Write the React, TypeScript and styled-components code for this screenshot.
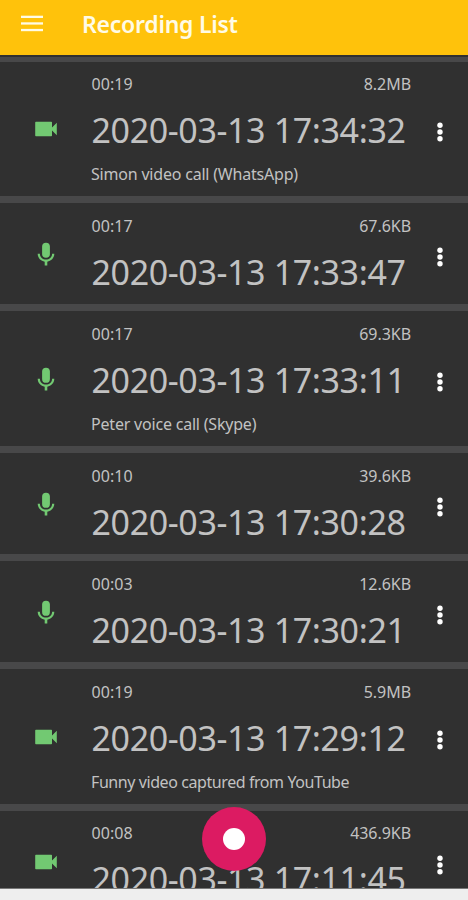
import React from "react";
import styled, { createGlobalStyle } from "styled-components";

const GlobalStyle = createGlobalStyle`
  * { box-sizing: border-box; }
  body { margin: 0; background: #eeeeee; font-family: "Noto Sans", sans-serif; }
`;

const Screen = styled.div`
  position: relative;
  width: 468px;
  height: 900px;
  overflow: hidden;
  display: flex;
  flex-direction: column;
  background: #eeeeee;
`;

const AppBar = styled.header`
  height: 55px;
  flex: none;
  display: flex;
  align-items: flex-start;
  background: #ffc20b;
  color: #fffbe6;
`;

const MenuButton = styled.button`
  border: 0;
  padding: 15px 0 0 21px;
  width: 82px;
  flex: none;
  background: none;
  color: inherit;
  text-align: left;
  line-height: 0;
`;

const Title = styled.h1`
  margin: 0;
  padding-top: 9px;
  font-size: 23px;
  line-height: 30px;
  font-weight: 600;
  letter-spacing: -0.25px;
  white-space: nowrap;
`;

const List = styled.main`
  height: 834px;
  flex: none;
  overflow: hidden;
  padding-top: 2px;
  background: #303030;
  border-bottom: 1px solid #777777;
`;

const Row = styled.article<{ $height: number; $rule?: number }>`
  height: ${(p) => p.$height}px;
  display: grid;
  grid-template-columns: 91px 320px 57px;
  border-top: ${(p) => p.$rule ?? 7}px solid #484849;
  background: #303030;
  color: #c2c2c2;
`;

const KindIcon = styled.div`
  display: flex;
  align-items: center;
  padding-left: 34px;
  color: #72c972;
`;

const Details = styled.div<{ $top: number }>`
  min-width: 0;
  padding-top: ${(p) => p.$top}px;
`;

const Meta = styled.div`
  display: flex;
  justify-content: space-between;
  font-size: 16px;
  line-height: 23px;
`;

const Duration = styled.span`
  margin-left: 0.5px;
  letter-spacing: 0.05px;
`;

const Size = styled.span`
  letter-spacing: -0.05px;
`;

const Stamp = styled.div`
  margin-left: 0.5px;
  padding-top: 11px;
  font-size: 34px;
  line-height: 46px;
  letter-spacing: -0.38px;
  white-space: nowrap;
`;

const Note = styled.div<{ $spacing: number }>`
  padding-top: 10px;
  font-size: 16px;
  line-height: 23px;
  letter-spacing: ${(p) => p.$spacing}px;
  white-space: nowrap;
`;

const MoreButton = styled.button`
  display: flex;
  align-items: center;
  border: 0;
  padding: 6px 0 0 23.5px;
  background: none;
  color: #ffffff;
`;

const RecordButton = styled.button`
  position: absolute;
  left: 202px;
  top: 807px;
  width: 64px;
  height: 64px;
  padding: 0;
  border: 0;
  border-radius: 50%;
  display: grid;
  place-items: center;
  background: #dc1b62;
`;

const RecordDot = styled.span`
  width: 22px;
  height: 22px;
  border-radius: 50%;
  background: #ffffff;
`;

const MenuIcon = () => (
  <svg width="22" height="17" viewBox="0 0 22 17" fill="currentColor">
    <rect y="0.7" width="22" height="2.3" />
    <rect y="7.3" width="22" height="2.3" />
    <rect y="13.9" width="22" height="2.3" />
  </svg>
);

const VideoIcon = () => (
  <svg width="24" height="24" viewBox="0 0 24 24" fill="currentColor">
    <path d="M1.9 4.8h15.4a.7.7 0 0 1 .7.7v4.9l4.8-4.7v12.6L18 13.6v4.9a.7.7 0 0 1-.7.7H1.9a.7.7 0 0 1-.7-.7v-13a.7.7 0 0 1 .7-.7z" />
  </svg>
);

const MicIcon = () => (
  <svg width="24" height="26" viewBox="0 0 24 26" fill="currentColor">
    <rect x="8.1" y="1.8" width="7.8" height="15" rx="3.9" />
    <path d="M3.7 12.8h2.2c0 3.6 2.8 5.8 6.1 5.8s6.1-2.2 6.1-5.8h2.2c0 4.1-3.2 7.3-7 7.9v3.8h-2.6v-3.8c-3.8-.6-7-3.8-7-7.9z" />
  </svg>
);

const MoreIcon = () => (
  <svg width="10" height="20" viewBox="0 0 10 20" fill="currentColor">
    <circle cx="5" cy="3.2" r="2.7" />
    <circle cx="5" cy="10" r="2.7" />
    <circle cx="5" cy="16.8" r="2.7" />
  </svg>
);

type Recording = {
  kind: "video" | "voice";
  duration: string;
  size: string;
  stamp: string;
  note?: string;
  spacing?: number;
  height: number;
  rule?: number;
  top?: number;
};

const recordings: Recording[] = [
  { kind: "video", duration: "00:19", size: "8.2MB", stamp: "2020-03-13 17:34:32", note: "Simon video call (WhatsApp)", spacing: -0.2, height: 139, rule: 5, top: 11 },
  { kind: "voice", duration: "00:17", size: "67.6KB", stamp: "2020-03-13 17:33:47", height: 108 },
  { kind: "voice", duration: "00:17", size: "69.3KB", stamp: "2020-03-13 17:33:11", note: "Peter voice call (Skype)", spacing: -0.2, height: 142 },
  { kind: "voice", duration: "00:10", size: "39.6KB", stamp: "2020-03-13 17:30:28", height: 108 },
  { kind: "voice", duration: "00:03", size: "12.6KB", stamp: "2020-03-13 17:30:21", height: 108 },
  { kind: "video", duration: "00:19", size: "5.9MB", stamp: "2020-03-13 17:29:12", note: "Funny video captured from YouTube", spacing: -0.42, height: 142 },
  { kind: "video", duration: "00:08", size: "436.9KB", stamp: "2020-03-13 17:11:45", height: 108, top: 11 },
];

export default function App() {
  return (
    <>
      <GlobalStyle />
      <Screen>
        <AppBar>
          <MenuButton aria-label="Menu"><MenuIcon /></MenuButton>
          <Title>Recording List</Title>
        </AppBar>
        <List>
          {recordings.map((r) => (
            <Row key={r.stamp} $height={r.height} $rule={r.rule}>
              <KindIcon>{r.kind === "video" ? <VideoIcon /> : <MicIcon />}</KindIcon>
              <Details $top={r.top ?? 12}>
                <Meta>
                  <Duration>{r.duration}</Duration>
                  <Size>{r.size}</Size>
                </Meta>
                <Stamp>{r.stamp}</Stamp>
                {r.note && <Note $spacing={r.spacing ?? 0}>{r.note}</Note>}
              </Details>
              <MoreButton aria-label="More options"><MoreIcon /></MoreButton>
            </Row>
          ))}
        </List>
        <RecordButton aria-label="Record"><RecordDot /></RecordButton>
      </Screen>
    </>
  );
}
